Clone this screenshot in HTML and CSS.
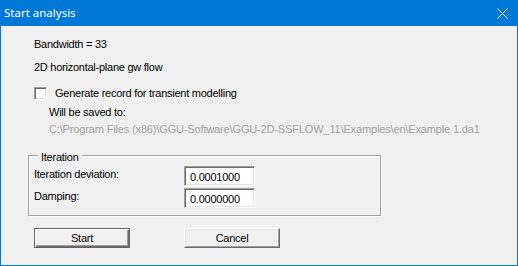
FILE: index.html
```html
<!DOCTYPE html>
<html>
<head>
<meta charset="utf-8">
<link rel="stylesheet" href="styles.css">
</head>
<body>
<div class="window">
  <div class="titlebar">
    <span class="title">Start analysis</span>
    <svg class="close" width="11" height="11" viewBox="0 0 11 11"><path d="M0.5 0.5 L10.5 10.5 M10.5 0.5 L0.5 10.5" stroke="#fff" stroke-width="1" fill="none"/></svg>
  </div>
  <div class="client">
    <div class="line">Bandwidth = 33</div>
    <div class="line second">2D horizontal-plane gw flow</div>
    <div class="check-row"><span class="checkbox"></span><span class="check-text">Generate record for transient modelling</span></div>
    <div class="line saved">Will be saved to:</div>
    <div class="line path">C:\Program Files (x86)\GGU-Software\GGU-2D-SSFLOW_11\Examples\en\Example 1.da1</div>
    <div class="group">
      <div class="group-label">Iteration</div>
      <div class="field-row"><span class="field-label">Iteration deviation:</span><span class="edit">0.0001000</span></div>
      <div class="field-row"><span class="field-label">Damping:</span><span class="edit">0.0000000</span></div>
    </div>
    <div class="buttons">
      <div class="btn default">Start</div>
      <div class="btn">Cancel</div>
    </div>
  </div>
</div>
</body>
</html>
```
FILE: styles.css
```css
html, body {
  margin: 0;
  padding: 0;
  background: #f0f0f0;
}
.window {
  width: 518px;
  height: 266px;
  box-sizing: border-box;
  border: 1px solid #0078d7;
  border-top: 0;
  background: #f0f0f0;
  font-family: "Liberation Sans", Arial, sans-serif;
  font-size: 11px;
  color: #000;
  overflow: hidden;
}
.titlebar {
  height: 26px;
  background: #0078d7;
  display: flex;
  align-items: center;
  padding-left: 4px;
  margin: 0 -1px;
  padding-right: 10px;
  box-sizing: border-box;
}
.title {
  color: #fff;
  font-family: "Noto Sans", "Open Sans", sans-serif;
  font-size: 11.5px;
  line-height: 16px;
}
.close {
  margin-left: auto;
  display: block;
}
.client {
  padding: 12px 0 0 33px;
  letter-spacing: -0.25px;
}
.line {
  line-height: 13px;
  height: 13px;
  white-space: nowrap;
}
.second {
  margin-top: 10px;
}
.check-row {
  display: flex;
  align-items: center;
  height: 13px;
  line-height: 13px;
  margin-top: 13px;
}
.checkbox {
  width: 13px;
  height: 13px;
  box-sizing: border-box;
  background: #fff;
  border: 1px solid;
  border-color: #a0a0a0 #fff #fff #a0a0a0;
  box-shadow: inset 1px 1px 0 #696969, inset -1px -1px 0 #e3e3e3;
  margin-right: 8px;
  flex: none;
}
.saved {
  margin-top: 6px;
  padding-left: 15px;
}
.path {
  margin-top: 4px;
  padding-left: 15px;
  color: #a0a0a0;
  letter-spacing: -0.15px;
}
.group {
  margin-top: 19px;
  margin-left: -6px;
  width: 353px;
  box-sizing: border-box;
  border: 1px solid #a0a0a0;
  box-shadow: 1px 1px 0 #fff, inset 1px 1px 0 #fff;
  padding: 0 0 7px 5px;
}
.group-label {
  margin: -5px 0 0 4px;
  padding: 0 3px;
  width: fit-content;
  background: #f0f0f0;
  line-height: 13px;
  height: 13px;
}
.field-row {
  display: flex;
  margin-top: 2px;
}
.field-label {
  width: 150px;
  padding-top: 2px;
  line-height: 13px;
}
.edit {
  width: 71px;
  height: 20px;
  box-sizing: border-box;
  background: #fff;
  border: 1px solid;
  border-color: #a0a0a0 #fff #fff #a0a0a0;
  box-shadow: inset 1px 1px 0 #696969, inset -1px -1px 0 #e3e3e3;
  padding: 4px 0 0 5px;
  line-height: 13px;
}
.buttons {
  display: flex;
  gap: 54px;
  margin-top: 12px;
}
.btn {
  width: 96px;
  height: 20px;
  box-sizing: border-box;
  line-height: 18px;
  text-align: center;
  background: #f0f0f0;
  border: 1px solid;
  border-color: #fff #696969 #696969 #fff;
  box-shadow: inset 1px 1px 0 #e3e3e3, inset -1px -1px 0 #a0a0a0;
}
.btn.default {
  border-color: #646464;
  box-shadow: inset 1px 1px 0 #fff, inset -1px -1px 0 #696969, inset -2px -2px 0 #a0a0a0;
}
```
